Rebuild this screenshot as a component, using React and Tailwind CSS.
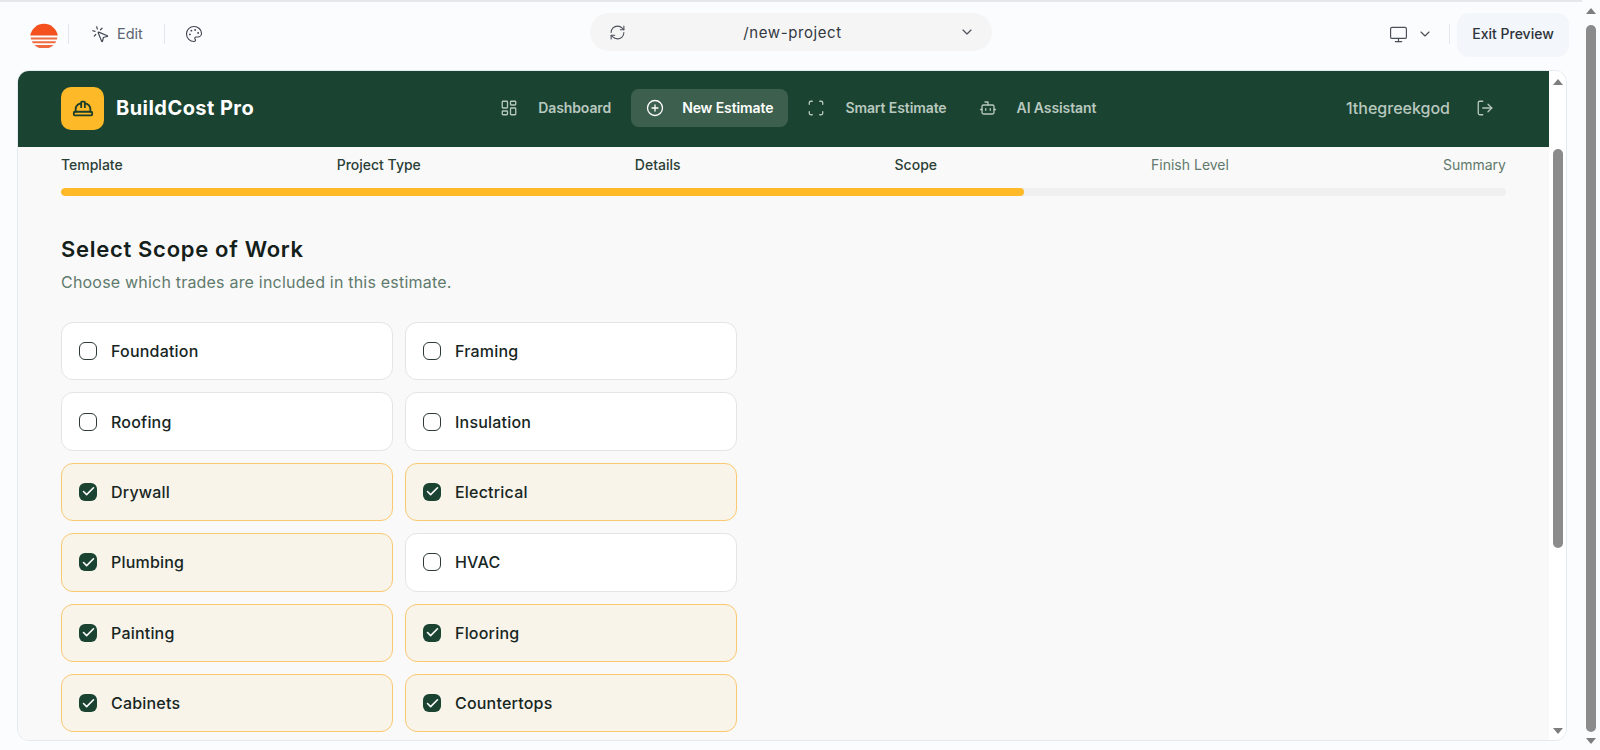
import {
  Bot,
  Check,
  ChevronDown,
  CirclePlus,
  HardHat,
  LayoutDashboard,
  LogOut,
  Monitor,
  MousePointerClick,
  Palette,
  RefreshCw,
  Scan,
} from "lucide-react";

const steps = [
  { label: "Template", done: true },
  { label: "Project Type", done: true },
  { label: "Details", done: true },
  { label: "Scope", done: true },
  { label: "Finish Level", done: false },
  { label: "Summary", done: false },
];

const trades = [
  { name: "Foundation", checked: false },
  { name: "Framing", checked: false },
  { name: "Roofing", checked: false },
  { name: "Insulation", checked: false },
  { name: "Drywall", checked: true },
  { name: "Electrical", checked: true },
  { name: "Plumbing", checked: true },
  { name: "HVAC", checked: false },
  { name: "Painting", checked: true },
  { name: "Flooring", checked: true },
  { name: "Cabinets", checked: true },
  { name: "Countertops", checked: true },
];

const SunLogo = () => (
  <svg width="28" height="28" viewBox="0 0 28 28">
    <path d="M0.2 15.5a14 14 0 0 1 27.6 0z" fill="#f4511e" />
    <path d="M0.6 17.4h26.8l-.5 2H1.1z" fill="#ef6a3e" />
    <path d="M1.9 21.2h24.2l-1 2H2.9z" fill="#ef6a3e" />
    <path d="M4.4 25h19.2a14 14 0 0 1-19.2 0z" fill="#ef6a3e" />
  </svg>
);

const Scrollbar = ({ track, thumbTop, thumbHeight }) => (
  <div className={`flex flex-col items-center shrink-0 h-full ${track}`}>
    <div className="h-0 w-0 mt-[8px] border-x-[5px] border-b-[6px] border-x-transparent border-b-[#7d7d7d]" />
    <div
      className="w-[10px] rounded-full bg-[#8b8b8b]"
      style={{ marginTop: thumbTop, height: thumbHeight }}
    />
    <div className="mt-auto mb-[6px] h-0 w-0 border-x-[5px] border-t-[6px] border-x-transparent border-t-[#7d7d7d]" />
  </div>
);

const Toolbar = () => (
  <div className="h-[68px] shrink-0 flex items-center pb-[2px] pl-[30px] pr-[13px] font-['Inter',sans-serif]">
    <div className="flex items-center w-[400px] mb-[2px]">
      <SunLogo />
      <div className="w-px h-5 bg-[#e3e7ec] ml-[10px]" />
      <MousePointerClick size={19} strokeWidth={1.5} className="ml-[22px] text-[#3f4650]" />
      <span className="ml-[7px] text-[14.5px] text-[#5b6470]">Edit</span>
      <div className="w-px h-5 bg-[#e3e7ec] ml-[21px]" />
      <Palette size={18} strokeWidth={1.5} className="ml-[20px] text-[#3f4650]" />
    </div>
    <div className="flex items-center justify-between w-[402px] h-[38px] ml-[160px] mb-[6px] rounded-full bg-[#f5f5f6] pl-[19px] pr-[17px]">
      <RefreshCw size={17} strokeWidth={1.5} className="text-[#4b5058]" />
      <span className="mt-[2px] text-[15px] tracking-[0.6px] text-[#33383f]">/new-project</span>
      <ChevronDown size={16} strokeWidth={1.75} className="text-[#4b5058]" />
    </div>
    <div className="flex items-center ml-auto">
      <Monitor size={19} strokeWidth={1.5} className="mb-[2px] text-[#4b5058]" />
      <ChevronDown size={16} strokeWidth={1.75} className="ml-[9px] mb-[2px] text-[#4b5058]" />
      <div className="w-px h-5 bg-[#e3e7ec] ml-[16px] mb-[2px]" />
      <button className="ml-[7px] w-[112px] h-[44px] pb-[3px] rounded-xl bg-[#f3f6fa] text-[14px] font-medium text-[#2d333b]">
        Exit Preview
      </button>
    </div>
  </div>
);

const NavItem = ({ icon: Icon, label, active, className }) => (
  <div
    className={`flex items-center h-[38px] rounded-lg px-[15px] text-[14px] font-semibold tracking-[-0.1px] ${
      active ? "gap-[18px] bg-[#3c5f4e] text-white" : "gap-[20px] text-[#b9c8bf]"
    } ${className}`}
  >
    <Icon size={18} strokeWidth={1.75} />
    <span>{label}</span>
  </div>
);

const Header = () => (
  <div className="h-[76px] shrink-0 flex items-center bg-[#1a4331] pb-[3px] pl-[43px] pr-[55px]">
    <div className="flex items-center justify-center w-[43px] h-[43px] mt-[2px] rounded-[10px] bg-[#fdb927]">
      <HardHat size={22} strokeWidth={2} className="text-[#1a3d2c]" />
    </div>
    <span className="ml-[12px] text-[20px] font-bold tracking-[0.45px] text-white">BuildCost Pro</span>
    <div className="flex items-center ml-[231px]">
      <NavItem icon={LayoutDashboard} label="Dashboard" />
      <NavItem icon={CirclePlus} label="New Estimate" active className="ml-[5px]" />
      <NavItem icon={Scan} label="Smart Estimate" className="ml-[4px]" />
      <NavItem icon={Bot} label="AI Assistant" className="ml-[2px]" />
    </div>
    <span className="ml-auto text-[16px] font-medium text-[#b9c8bf]">1thegreekgod</span>
    <LogOut size={18} strokeWidth={1.75} className="ml-[26px] text-[#b9c8bf]" />
  </div>
);

const Stepper = () => (
  <div>
    <div className="flex justify-between pt-[8px] text-[14px] leading-5">
      {steps.map((step) => (
        <span
          key={step.label}
          className={step.done ? "font-medium text-[#2a4035]" : "text-[#5f7a6c]"}
        >
          {step.label}
        </span>
      ))}
    </div>
    <div className="mt-[13px] h-[8px] rounded-full bg-[#f0f0f0] overflow-hidden">
      <div className="h-full w-2/3 rounded-full bg-[#fdb927]" />
    </div>
  </div>
);

const TradeCard = ({ name, checked }) => (
  <div
    className={`flex items-center h-[58.4px] rounded-xl border pl-[17px] ${
      checked ? "bg-[#f8f4ea] border-[#f9c86f]" : "bg-white border-[#e2e4e7]"
    }`}
  >
    {checked ? (
      <div className="flex items-center justify-center w-[18px] h-[18px] rounded-[6px] bg-[#1a4331]">
        <Check size={15} strokeWidth={2.5} className="text-white" />
      </div>
    ) : (
      <div className="w-[18px] h-[18px] rounded-[6px] border-[1.5px] border-[#2b3a33] bg-white" />
    )}
    <span className="ml-[14px] text-[16px] font-[450] tracking-[0.2px] text-[#17261f]">{name}</span>
  </div>
);

export default function App() {
  return (
    <div className="flex w-[1600px] h-[750px] overflow-hidden bg-[#fbfcfe] font-['Inter',sans-serif]">
      <div className="flex flex-col flex-1 min-w-0">
        <div className="h-[2px] shrink-0 bg-[#e5e7eb]" />
        <Toolbar />
        <div className="flex mr-[15px] ml-[17px] h-[671px] rounded-xl border border-[#e4e9f0] overflow-hidden bg-white">
          <div className="flex flex-col flex-1 min-w-0 bg-[#f9f9f9]">
            <Header />
            <div className="px-[43px]">
              <Stepper />
              <h2 className="mt-[37px] text-[22px] leading-8 font-semibold tracking-[0.7px] text-[#14201a]">
                Select Scope of Work
              </h2>
              <p className="mt-[5px] text-[16px] leading-6 tracking-[0.2px] text-[#5f7a6c]">
                Choose which trades are included in this estimate.
              </p>
              <div className="mt-[28px] grid grid-cols-2 gap-3 w-[676px]">
                {trades.map((trade) => (
                  <TradeCard key={trade.name} name={trade.name} checked={trade.checked} />
                ))}
              </div>
            </div>
          </div>
          <Scrollbar track="w-[17px] bg-white" thumbTop={64} thumbHeight={399} />
        </div>
      </div>
      <Scrollbar track="w-[18px] bg-[#fbfcfe]" thumbTop={11} thumbHeight={707} />
    </div>
  );
}
